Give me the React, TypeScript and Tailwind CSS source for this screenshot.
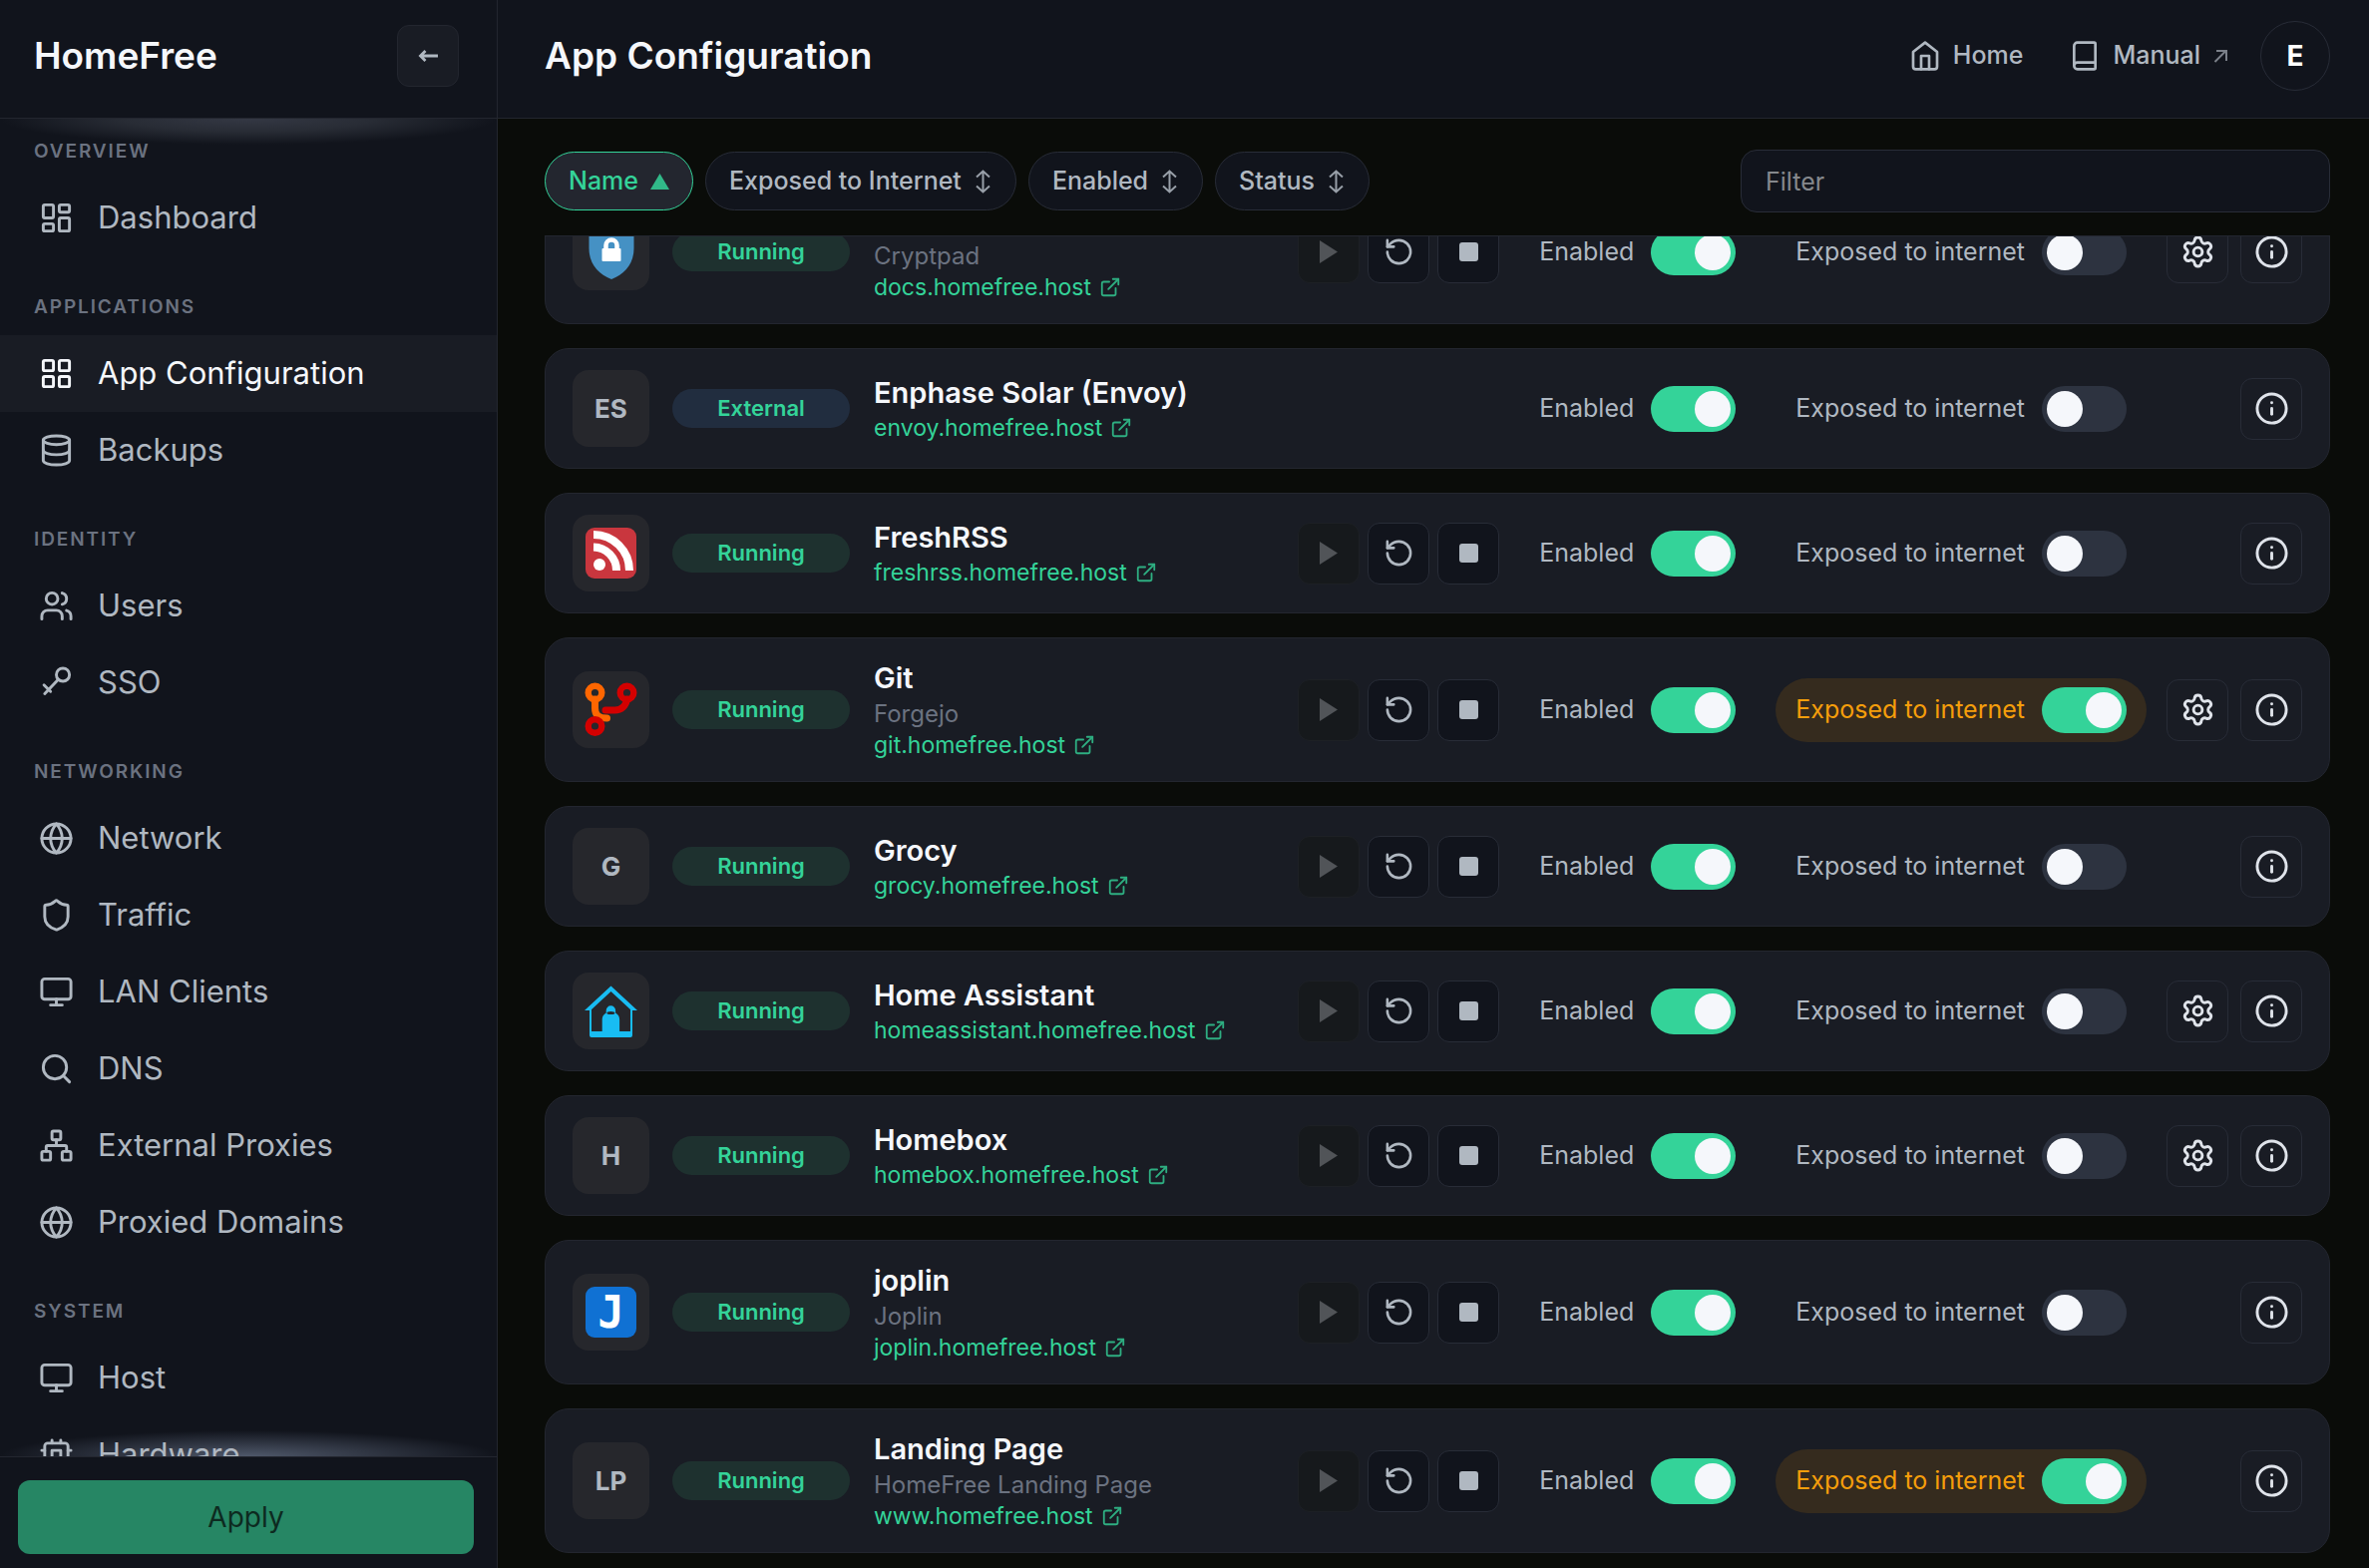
import { useState } from 'react'
import type { ReactNode } from 'react'
import clsx from 'clsx'
import {
  Book,
  Database,
  ExternalLink,
  Info,
  LayoutDashboard,
  LayoutGrid,
  Monitor,
  Network,
  RotateCcw,
  Search,
  Settings,
  Shield,
  Users,
} from 'lucide-react'

type App = {
  id: string
  name: string
  subtitle?: string
  host: string
  status: 'Running' | 'External'
  logo?: ReactNode
  initials?: string
  exposed?: boolean
  settings?: boolean
}

type IconProps = { className?: string; children?: ReactNode }

const StrokeIcon = ({ className, children }: IconProps) => (
  <svg viewBox="0 0 24 24" className={className} fill="none" stroke="currentColor" strokeWidth="2" strokeLinecap="round" strokeLinejoin="round">
    {children}
  </svg>
)

const KeyIcon = ({ className }: IconProps) => (
  <StrokeIcon className={className}>
    <circle cx="16.500" cy="6.500" r="4.500" />
    <path d="M13.300 9.700 4 19.500M3.500 13.500 8 18" />
  </StrokeIcon>
)

const GlobeIcon = ({ className }: IconProps) => (
  <StrokeIcon className={className}>
    <circle cx="12" cy="12" r="10" />
    <path d="M2 12h20M12 2a15.300 15.300 0 0 1 4 10 15.300 15.300 0 0 1-4 10 15.300 15.300 0 0 1-4-10 15.300 15.300 0 0 1 4-10z" />
  </StrokeIcon>
)

const CpuIcon = ({ className }: IconProps) => (
  <StrokeIcon className={className}>
    <rect x="4" y="4" width="16" height="16" rx="2" />
    <path d="M9 9h6v6H9zM9 2v2M15 2v2M9 20v2M15 20v2M20 9h2M20 15h2M2 9h2M2 15h2" />
  </StrokeIcon>
)

const HomeIcon = ({ className }: IconProps) => (
  <StrokeIcon className={className}>
    <path d="m3 9 9-7 9 7v11a2 2 0 0 1-2 2H5a2 2 0 0 1-2-2z" />
    <path d="M9 22V12h6v10" />
  </StrokeIcon>
)

const CryptpadLogo = () => (
  <svg viewBox="0 0 54 56" className="h-14 w-[54px]">
    <path d="M27 0 49.500 7v17c0 15-9 26-22.500 31C13.500 50 4.500 39 4.500 24V7z" fill="#4591c4" />
    <rect x="17.500" y="24" width="19" height="13" rx="1" fill="#fff" />
    <path d="M21.500 25v-4a5.500 5.500 0 0 1 11 0v4" fill="none" stroke="#fff" strokeWidth="4.500" />
  </svg>
)

const FreshRssLogo = () => (
  <svg viewBox="0 0 51 51" className="size-[51px]">
    <rect width="51" height="51" rx="9" fill="#c9363e" />
    <circle cx="14" cy="37" r="6" fill="#fff" />
    <path d="M8 19.500A23.500 23.500 0 0 1 31 43M8 7a36 36 0 0 1 36 36" fill="none" stroke="#fff" strokeWidth="8" />
  </svg>
)

const ForgejoLogo = () => (
  <svg viewBox="0 0 77 77" className="size-full" fill="none" strokeLinecap="round">
    <path d="M22.500 28v9c0 7 4 10 12 10" stroke="#ff6600" strokeWidth="7" />
    <path d="M54.500 28c-1 7-6 11-12 11H33" stroke="#d40000" strokeWidth="7" />
    <circle cx="22.500" cy="21.500" r="6.800" stroke="#ff6600" strokeWidth="6.400" />
    <circle cx="54.500" cy="21.500" r="6.800" stroke="#d40000" strokeWidth="6.400" />
    <circle cx="22.500" cy="55" r="6.800" stroke="#d40000" strokeWidth="6.400" />
  </svg>
)

const HomeAssistantLogo = () => (
  <svg viewBox="0 0 77 77" className="size-full">
    <path d="M38.500 13.500 65 38h-6L38.500 19 18 38h-6z" fill="#18bcf2" />
    <path d="M17 37h2v22h39V37h2v26a2 2 0 0 1-2 2H19a2 2 0 0 1-2-2z" fill="#18bcf2" />
    <path d="M29.700 60V47c0-3 1.500-5 4-6.500V38a4.700 4.700 0 0 1 9.400 0v2.500c2.500 1.500 4 3.500 4 6.500v13z" fill="#18bcf2" />
    <ellipse cx="38.400" cy="40.500" rx="4" ry="1.600" fill="#26272c" />
  </svg>
)

const JoplinLogo = () => (
  <span className="flex size-[51px] items-center justify-center rounded-[9px] bg-[#1071d3] font-['DejaVu_Sans_Mono',monospace] text-[44px] leading-none font-bold text-white">
    J
  </span>
)

const navGroups = [
  { title: 'Overview', items: [{ label: 'Dashboard', icon: LayoutDashboard }] },
  {
    title: 'Applications',
    items: [
      { label: 'App Configuration', icon: LayoutGrid, active: true },
      { label: 'Backups', icon: Database },
    ],
  },
  {
    title: 'Identity',
    items: [
      { label: 'Users', icon: Users },
      { label: 'SSO', icon: KeyIcon },
    ],
  },
  {
    title: 'Networking',
    items: [
      { label: 'Network', icon: GlobeIcon },
      { label: 'Traffic', icon: Shield },
      { label: 'LAN Clients', icon: Monitor },
      { label: 'DNS', icon: Search },
      { label: 'External Proxies', icon: Network },
      { label: 'Proxied Domains', icon: GlobeIcon },
    ],
  },
  {
    title: 'System',
    items: [
      { label: 'Host', icon: Monitor },
      { label: 'Hardware', icon: CpuIcon },
    ],
  },
]

const apps: App[] = [
  { id: 'docs', name: 'Docs', subtitle: 'Cryptpad', host: 'docs.homefree.host', status: 'Running', logo: <CryptpadLogo />, settings: true },
  { id: 'envoy', name: 'Enphase Solar (Envoy)', host: 'envoy.homefree.host', status: 'External', initials: 'ES' },
  { id: 'freshrss', name: 'FreshRSS', host: 'freshrss.homefree.host', status: 'Running', logo: <FreshRssLogo /> },
  { id: 'git', name: 'Git', subtitle: 'Forgejo', host: 'git.homefree.host', status: 'Running', logo: <ForgejoLogo />, exposed: true, settings: true },
  { id: 'grocy', name: 'Grocy', host: 'grocy.homefree.host', status: 'Running', initials: 'G' },
  { id: 'homeassistant', name: 'Home Assistant', host: 'homeassistant.homefree.host', status: 'Running', logo: <HomeAssistantLogo />, settings: true },
  { id: 'homebox', name: 'Homebox', host: 'homebox.homefree.host', status: 'Running', initials: 'H', settings: true },
  { id: 'joplin', name: 'joplin', subtitle: 'Joplin', host: 'joplin.homefree.host', status: 'Running', logo: <JoplinLogo /> },
  { id: 'www', name: 'Landing Page', subtitle: 'HomeFree Landing Page', host: 'www.homefree.host', status: 'Running', initials: 'LP', exposed: true },
]

const sorts = ['Name', 'Exposed to Internet', 'Enabled', 'Status']

function Toggle({ id, label, defaultChecked, warn }: { id: string; label: string; defaultChecked?: boolean; warn?: boolean }) {
  const [on, setOn] = useState(!!defaultChecked)
  return (
    <label
      htmlFor={id}
      className={clsx(
        'flex h-16 cursor-pointer items-center gap-[17px] rounded-full px-5 text-[25px]',
        warn && on ? 'bg-[#352b1e] text-[#f59e0b]' : 'text-[#b0b8c1]'
      )}
    >
      {label}
      <input
        id={id}
        type="checkbox"
        role="switch"
        checked={on}
        onChange={(e) => setOn(e.target.checked)}
        className="h-[46px] w-[85px] shrink-0 cursor-pointer appearance-none rounded-full bg-[#2d3340] p-[5px] before:block before:size-9 before:rounded-full before:bg-[#f5f7fb] checked:bg-[#34d399] checked:before:ml-auto"
      />
    </label>
  )
}

function IconButton({ label, disabled, dark, children }: { label: string; disabled?: boolean; dark?: boolean; children: ReactNode }) {
  return (
    <button
      type="button"
      aria-label={label}
      disabled={disabled}
      className={clsx(
        'flex size-[62px] items-center justify-center rounded-xl border',
        disabled && 'border-[#1d2025] bg-[#16191c] text-[#515458]',
        !disabled && dark && 'border-[#282c37] bg-[#11141c] text-[#b0b8c1]',
        !disabled && !dark && 'border-[#282c37] text-[#dfe3ea]'
      )}
    >
      {children}
    </button>
  )
}

function AppCard({ app }: { app: App }) {
  return (
    <li className="flex items-center rounded-3xl border border-[#23262f] bg-[#191c24] px-[27px] py-[21px]">
      <div className="flex size-[77px] shrink-0 items-center justify-center rounded-2xl bg-[#26272c] text-[26px] font-bold text-[#b0b8c1]">
        {app.logo ?? app.initials}
      </div>
      <span
        className={clsx(
          'ml-[23px] flex h-[39px] w-[178px] shrink-0 items-center justify-center rounded-full text-[22px] font-semibold text-[#34d399]',
          app.status === 'External' ? 'bg-[#212d3f]' : 'bg-[#1e312f]'
        )}
      >
        {app.status}
      </span>
      <div className="ml-6 min-w-0 flex-1">
        <h2 className="mb-px text-[29px] leading-[38px] font-semibold text-[#f5f7fb]">{app.name}</h2>
        {app.subtitle && <p className="text-[24px] leading-8 text-[#6b7280]">{app.subtitle}</p>}
        <a href="#" className="flex items-center gap-2 text-[23px] leading-[30px] text-[#34d399]">
          {app.host}
          <ExternalLink className="size-[22px] opacity-80" />
        </a>
      </div>
      {app.status === 'Running' && (
        <div className="mr-5 flex gap-2">
          <IconButton label={`Start ${app.name}`} dark disabled>
            <svg viewBox="0 0 18 23" className="h-[23px] w-[18px]" fill="currentColor"><path d="M0 0v23l18-11.500z" /></svg>
          </IconButton>
          <IconButton label={`Restart ${app.name}`} dark>
            <RotateCcw className="size-[31px]" />
          </IconButton>
          <IconButton label={`Stop ${app.name}`} dark>
            <span className="size-[19px] rounded-[3px] bg-[#b0b8c1]" />
          </IconButton>
        </div>
      )}
      <Toggle id={`${app.id}-enabled`} label="Enabled" defaultChecked />
      <div className="ml-5">
        <Toggle id={`${app.id}-exposed`} label="Exposed to internet" defaultChecked={app.exposed} warn />
      </div>
      <div className="ml-5 flex w-[136px] justify-end gap-3">
        {app.settings && (
          <IconButton label={`${app.name} settings`}>
            <Settings className="size-[35px]" />
          </IconButton>
        )}
        <IconButton label={`${app.name} info`}>
          <Info className="size-[35px]" />
        </IconButton>
      </div>
    </li>
  )
}

export default function AppConfigurationPage() {
  const [filter, setFilter] = useState('')
  const visible = apps.filter((a) => a.name.toLowerCase().includes(filter.toLowerCase()))

  return (
    <div className="flex h-screen overflow-hidden bg-[#0a0c09] font-['Inter',sans-serif] text-[#b0b8c1]">
      <aside className="flex w-[499px] shrink-0 flex-col border-r border-[#23262f] bg-[#11141c]">
        <div className="flex h-[119px] shrink-0 items-center justify-between border-b border-[#23262f] pr-[38px] pb-[6px] pl-[34px]">
          <span className="text-[37px] font-semibold text-[#f5f7fb]">HomeFree</span>
          <button type="button" aria-label="Collapse sidebar" className="flex size-[62px] items-center justify-center rounded-xl border border-[#23262f] bg-[#191c24]">
            <svg viewBox="0 0 20 12" className="h-3 w-5" fill="none" stroke="currentColor" strokeWidth="2.800">
              <path d="M20 6H2M7.500 1l-5 5 5 5" />
            </svg>
          </button>
        </div>

        <nav className="relative isolate min-h-0 flex-1 overflow-hidden">
          {/* Scroll shadows */}
          <div className="pointer-events-none absolute inset-x-0 top-0 -z-10 h-[26px] bg-[radial-gradient(farthest-side_at_50%_0,#343844,#282c35_50%,transparent)]" />
          <div className="pointer-events-none absolute inset-x-0 bottom-0 -z-10 h-[26px] bg-[radial-gradient(farthest-side_at_50%_100%,#4f586a,transparent)]" />
          {navGroups.map((group, i) => (
            <section key={group.title}>
              <h2
                className={clsx(
                  'pb-[14px] pl-[34px] text-[19px] leading-7 font-semibold tracking-widest text-[#6b7280] uppercase',
                  i === 0 ? 'pt-[19px]' : 'pt-[37px]'
                )}
              >
                {group.title}
              </h2>
              {group.items.map(({ label, icon: Icon, ...item }) => (
                <a
                  key={label}
                  href="#"
                  className={clsx(
                    'flex h-[77px] items-center gap-6 pl-[39px] text-[31px]',
                    'active' in item ? 'bg-[#191c24] text-[#f5f7fb]' : 'text-[#b0b8c1]'
                  )}
                >
                  <Icon className="size-[35px]" />
                  {label}
                </a>
              ))}
            </section>
          ))}
        </nav>

        <div className="border-t border-[#23262f] pt-[23px] pr-[23px] pb-[14px] pl-[18px]">
          <button type="button" className="h-[74px] w-full rounded-xl bg-[#268664] text-[28px] text-[#0d2a20]">
            Apply
          </button>
        </div>
      </aside>

      <main className="flex min-w-0 flex-1 flex-col">
        <header className="flex h-[119px] shrink-0 items-center border-b border-[#23262f] bg-[#11141c] pr-[39px] pb-[6px] pl-[47px]">
          <h1 className="flex-1 text-[37px] font-semibold text-[#f5f7fb]">App Configuration</h1>
          <a href="#" className="flex items-center gap-3 text-[25px] font-medium">
            <HomeIcon className="size-8" />
            Home
          </a>
          <a href="#" className="ml-[46px] flex items-center gap-3 text-[25px] font-medium">
            <Book className="size-8" />
            Manual
            <svg viewBox="0 0 16 14" className="h-[14px] w-4 text-[#7b8089]" fill="none" stroke="currentColor" strokeWidth="2">
              <path d="M2.500 13 13.500 2M4 2h10v10" />
            </svg>
          </a>
          <button type="button" aria-label="Account" className="ml-8 flex size-[70px] items-center justify-center rounded-full border border-[#282c37] text-[28px] font-bold text-white">
            E
          </button>
        </header>

        <div className="mr-[39px] ml-[47px] flex h-[118px] shrink-0 items-center gap-3 border-b border-[#23262f] pt-2">
          {sorts.map((sort, i) => (
            <button
              key={sort}
              type="button"
              className={clsx(
                'flex h-[59px] items-center gap-3 rounded-full border px-[23px] text-[25px] font-medium',
                i === 0 ? 'border-[#34d399] bg-[#23262f] text-[#34d399]' : 'border-[#282c37] bg-[#11141c] text-[#b0b8c1]'
              )}
            >
              {sort}
              {i === 0 ? (
                <svg viewBox="0 0 19 16" className="h-4 w-[19px] opacity-85" fill="currentColor"><path d="M9.500 0 19 16H0z" /></svg>
              ) : (
                <svg viewBox="0 0 19 24" className="h-6 w-[19px] opacity-85" fill="none" stroke="currentColor" strokeWidth="2">
                  <path d="M9.500 1.500v21M3 7.500l6.500-6 6.500 6M3 16.500l6.500 6 6.500-6" />
                </svg>
              )}
            </button>
          ))}
          <input
            type="text"
            aria-label="Filter apps"
            placeholder="Filter"
            value={filter}
            onChange={(e) => setFilter(e.target.value)}
            className="ml-auto h-[63px] w-[591px] rounded-2xl border border-[#282c37] bg-[#11141c] px-6 text-[25px] placeholder:text-[#85888c]"
          />
        </div>

        <div className="min-h-0 flex-1 overflow-hidden pr-[39px] pl-[47px]">
          <ul className="-mt-[57px] flex flex-col gap-6">
            {visible.map((app) => (
              <AppCard key={app.id} app={app} />
            ))}
          </ul>
        </div>
      </main>
    </div>
  )
}
